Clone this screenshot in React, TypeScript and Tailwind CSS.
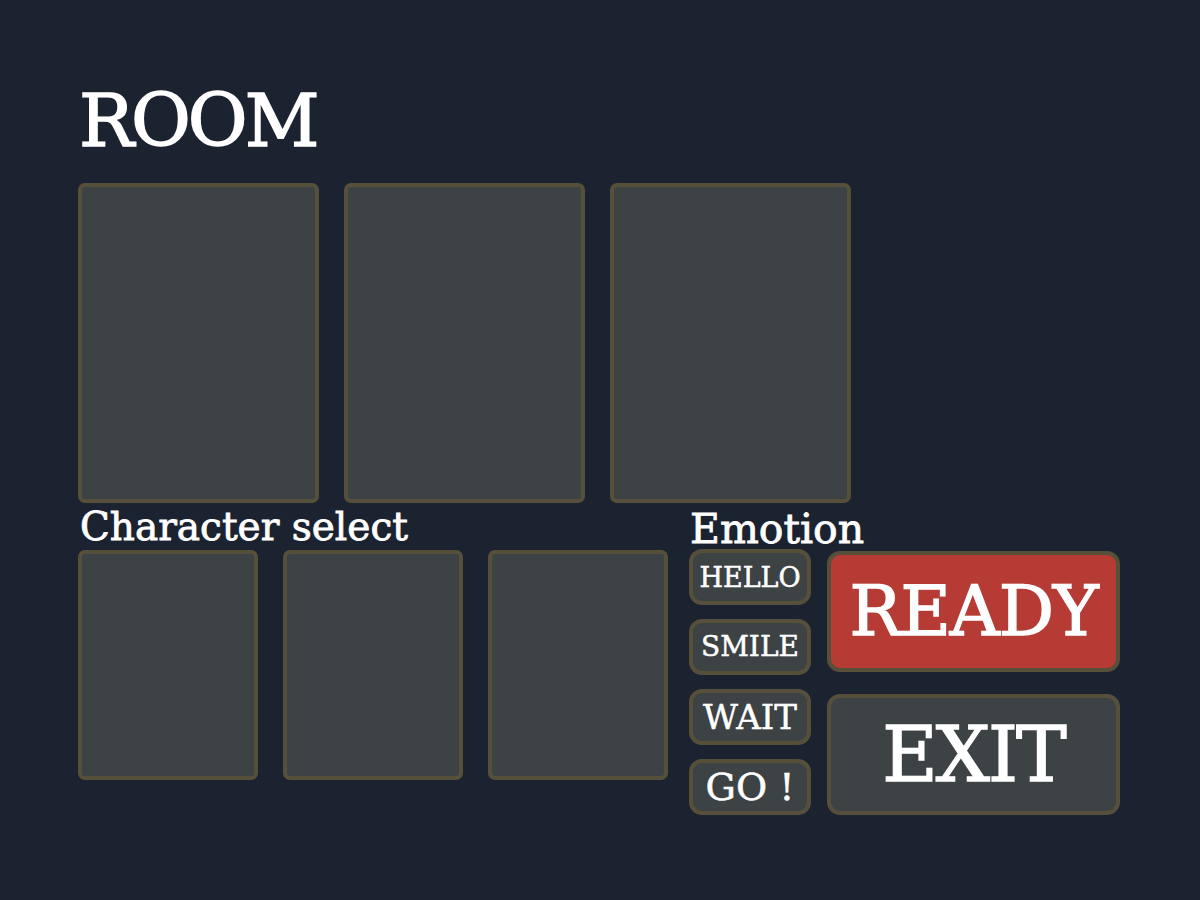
import React from 'react'

const font = { fontFamily: '"DejaVu Serif", "Liberation Serif", serif' }

const SLOT = 'rounded-[7px] border-4 border-[#56503b] bg-[#3d4245]'

// emotion buttons: label text sized so each fills the pill
const EMOTIONS = [
  { label: 'HELLO', size: 'text-[27px]' },
  { label: 'SMILE', size: 'text-[28px]' },
  { label: 'WAIT', size: 'text-[34px]' },
  { label: 'GO !', size: 'text-[38px]' },
]

export default function App() {
  return (
    <div className="min-h-screen w-full bg-[#1c2330] text-white" style={font}>
      <div className="pl-[78px] pt-[84px]">
        <h1 className="text-[73px] leading-[74px] pl-[1px] tracking-[-3px] [-webkit-text-stroke:1.5px_white]">ROOM</h1>

        {/* Room slots */}
        <div className="mt-[25px] flex gap-[25px]">
          {[0, 1, 2].map((i) => (
            <div key={i} className={`${SLOT} w-[241px] h-[320px]`} />
          ))}
        </div>

        <div className="flex gap-[21px]">
          {/* Character select */}
          <div className="w-[590px]">
            <div className="text-[39px] leading-[47px] pl-[2px] [-webkit-text-stroke:0.8px_white]">Character select</div>
            <div className="flex gap-[25px]">
              {[0, 1, 2].map((i) => (
                <div key={i} className={`${SLOT} w-[180px] h-[230px]`} />
              ))}
            </div>
          </div>

          {/* Emotion + actions */}
          <div>
            <div className="text-[41px] leading-[40px] pt-[6px] pl-[1px] [-webkit-text-stroke:0.8px_white]">Emotion</div>
            <div className="flex gap-[16px]">
              <div className="flex flex-col gap-[14px]">
                {EMOTIONS.map((e) => (
                  <button
                    key={e.label}
                    className={`w-[122px] h-[56px] rounded-[13px] border-4 border-[#56503b] bg-[#3d4245] flex items-center justify-center leading-none [-webkit-text-stroke:0.5px_white] ${e.size}`}
                    style={font}
                  >
                    {e.label}
                  </button>
                ))}
              </div>
              <div className="mt-[2px] flex flex-col gap-[22px]">
                <button
                  className="w-[293px] h-[121px] rounded-[13px] border-4 border-[#56503b] bg-[#b53b34] flex items-center justify-center text-[69px] leading-none tracking-[-1px] [-webkit-text-stroke:1.5px_white]"
                  style={font}
                >
                  READY
                </button>
                <button
                  className="w-[293px] h-[121px] rounded-[13px] border-4 border-[#56503b] bg-[#3d4245] flex items-center justify-center text-[76px] leading-none tracking-[-2px] [-webkit-text-stroke:1.5px_white]"
                  style={font}
                >
                  EXIT
                </button>
              </div>
            </div>
          </div>
        </div>
      </div>
    </div>
  )
}
